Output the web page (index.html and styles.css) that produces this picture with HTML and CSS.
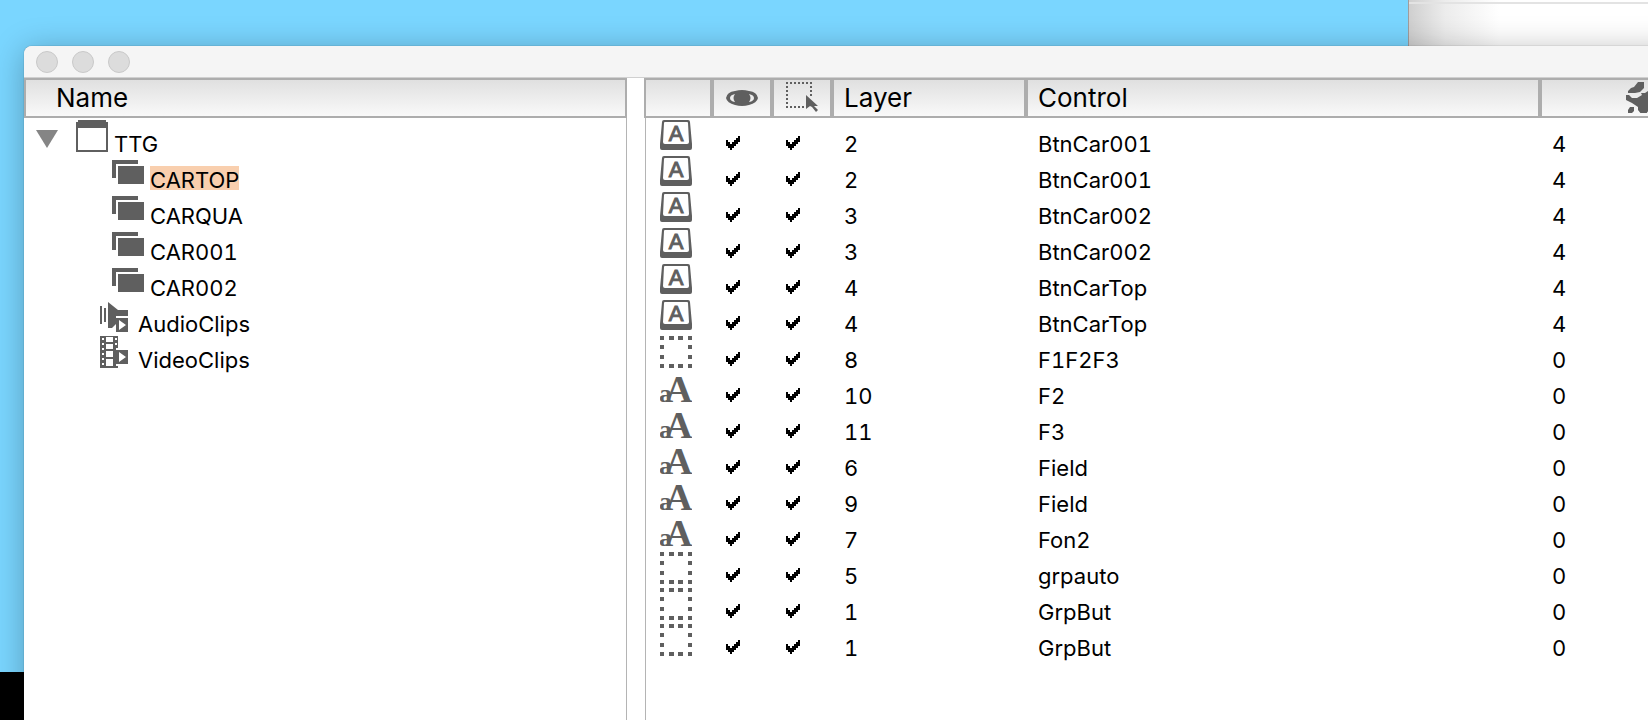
FILE: index.html
```html
<!DOCTYPE html>
<html lang="en">
<head>
  <meta charset="UTF-8">
  <meta name="viewport" content="width=device-width, initial-scale=1.0">
  <title>Project</title>
  <link rel="stylesheet" href="styles.css">
</head>
<body>

  <svg class="sprite" aria-hidden="true">
    <symbol id="icon-card" viewBox="0 0 32 32">
      <path d="M2 0h28v2h2v30H0V2h2zM2 8v22h28V8z" fill-rule="evenodd"/>
    </symbol>
    <symbol id="icon-stack" viewBox="0 0 32 32">
      <path d="M0 4h26v4H4v14H0zM6 10h26v18H6z"/>
    </symbol>
    <symbol id="icon-audio" viewBox="0 0 32 32">
      <path d="M0 6h2v18H0zM4 8h2v14H4zM8 2l10 8h10v6H16v8l-4 4H8z"/>
      <path d="M16 18h12v14H16zM19 20v10l7-5z" fill-rule="evenodd"/>
    </symbol>
    <symbol id="icon-video" viewBox="0 0 32 32">
      <path d="M0 0h18v12h-2v20H0zM2 2v2h2V2zM2 7v2h2V7zM2 12v2h2v-2zM2 17v2h2v-2zM2 22v2h2v-2zM2 27v2h2v-2zM6 1v5h7V1zM6 8v5h7V8zM6 15v6h7v-6zM6 23v7h7v-7zM15 2v2h2V2zM15 7v2h2V7z" fill-rule="evenodd"/>
      <path d="M16 14h12v14H16zM19 16v10l7-5zM13 30h5v2h-5z" fill-rule="evenodd"/>
    </symbol>
    <symbol id="icon-button" viewBox="0 0 32 32">
      <path d="M4 0h24q2 0 2 2l2 22v4q0 2-2 2H2q-2 0-2-2v-4L2 2q0-2 2-2zM5 2q-1 0-1 1L3 22q0 2 2 2h22q2 0 2-2L28 3q0-1-1-1z" fill-rule="evenodd"/>
      <text x="16" y="21" text-anchor="middle" class="glyph-sans">A</text>
    </symbol>
    <symbol id="icon-group" viewBox="0 0 32 32">
      <path d="M0 0h4v4H0zM9 0h5v4H9zM18 0h5v4h-5zM28 0h4v4h-4zM0 9h4v4H0zM28 9h4v4h-4zM0 19h4v4H0zM28 19h4v4h-4zM0 28h4v4H0zM9 28h5v4H9zM18 28h5v4h-5zM28 28h4v4h-4z"/>
    </symbol>
    <symbol id="icon-field" viewBox="0 0 32 32">
      <text x="-1" y="30" class="glyph-small">a</text>
      <text x="5" y="30" class="glyph-serif">A</text>
    </symbol>
    <symbol id="icon-eye" viewBox="0 0 32 32">
      <path d="M0 18Q1 12 9 11q7-2 14 0 8 1 9 7-1 5-9 7-7 2-14 0-8-2-9-7zM4 18q0 3 5 4-3-4 0-8-5 1-5 4zM28 18q0-3-5-4 3 4 0 8 5-1 5-4z" fill-rule="evenodd"/>
    </symbol>
    <symbol id="icon-select" viewBox="0 0 32 32">
      <path d="M0 3h26M0 27h20" fill="none" stroke="#5f5f5f" stroke-width="2" stroke-dasharray="2 2"/>
      <path d="M1 6v20M25 6v12" fill="none" stroke="#5f5f5f" stroke-width="2" stroke-dasharray="2 2"/>
      <path d="M20 15l12 11h-4l4 4-2 2-4-5-2-1-4 3z"/>
    </symbol>
    <symbol id="icon-script" viewBox="0 0 32 32">
      <path d="M12 1h6v6l-4 4-5 1H2v-2l3-3 3-1zM0 14h3l3 3h5l5-3-1-2h4l3-2 6 5 3 3v4l-5 3-6 8-4 1-4-5v-3l-6-4-6-3zM4 26h4v4l-2 2H2v-3z"/>
    </symbol>
  </svg>

  <div class="back-window"></div>
  <div class="dock"></div>

  <main class="window">
    <div class="titlebar">
      <button type="button" class="dot" aria-label="Close"></button>
      <button type="button" class="dot" aria-label="Minimize"></button>
      <button type="button" class="dot" aria-label="Zoom"></button>
    </div>

    <div class="panes">
      <section class="tree-pane">
        <h2 class="pane-head">Name</h2>
        <ul class="tree">
          <li>
            <div class="node root">
              <button type="button" class="toggle" aria-label="Collapse TTG"></button>
              <svg class="icon"><use href="#icon-card"/></svg>
              <span class="label">TTG</span>
            </div>
            <ul class="tree cards">
              <li class="node"><svg class="icon"><use href="#icon-stack"/></svg><span class="label selected">CARTOP</span></li>
              <li class="node"><svg class="icon"><use href="#icon-stack"/></svg><span class="label">CARQUA</span></li>
              <li class="node"><svg class="icon"><use href="#icon-stack"/></svg><span class="label">CAR001</span></li>
              <li class="node"><svg class="icon"><use href="#icon-stack"/></svg><span class="label">CAR002</span></li>
            </ul>
            <ul class="tree clips">
              <li class="node"><svg class="icon"><use href="#icon-audio"/></svg><span class="label">AudioClips</span></li>
              <li class="node"><svg class="icon"><use href="#icon-video"/></svg><span class="label">VideoClips</span></li>
            </ul>
          </li>
        </ul>
      </section>

      <section class="table-pane">
        <table class="controls">
          <colgroup>
            <col class="col-type">
            <col class="col-check">
            <col class="col-check">
            <col class="col-layer">
            <col>
            <col class="col-script">
          </colgroup>
          <thead>
            <tr>
              <th></th>
              <th class="tool" aria-label="Visible"><svg class="icon"><use href="#icon-eye"/></svg></th>
              <th class="tool" aria-label="Selectable"><svg class="icon"><use href="#icon-select"/></svg></th>
              <th>Layer</th>
              <th>Control</th>
              <th class="center" aria-label="Script"><svg class="icon"><use href="#icon-script"/></svg></th>
            </tr>
          </thead>
          <tbody id="rows"></tbody>
        </table>
      </section>
    </div>
  </main>

  <script>
    // type, layer, control, script lines
    var controls = [
      ['button', 2, 'BtnCar001', 4],
      ['button', 2, 'BtnCar001', 4],
      ['button', 3, 'BtnCar002', 4],
      ['button', 3, 'BtnCar002', 4],
      ['button', 4, 'BtnCarTop', 4],
      ['button', 4, 'BtnCarTop', 4],
      ['group', 8, 'F1F2F3', 0],
      ['field', 10, 'F2', 0],
      ['field', 11, 'F3', 0],
      ['field', 6, 'Field', 0],
      ['field', 9, 'Field', 0],
      ['field', 7, 'Fon2', 0],
      ['group', 5, 'grpauto', 0],
      ['group', 1, 'GrpBut', 0],
      ['group', 1, 'GrpBut', 0]
    ];

    document.getElementById('rows').innerHTML = controls.map(function (c) {
      return '<tr>' +
        '<td class="type"><svg class="icon"><use href="#icon-' + c[0] + '"/></svg></td>' +
        '<td class="check"><input type="checkbox" checked aria-label="' + c[2] + ' visible"></td>' +
        '<td class="check"><input type="checkbox" checked aria-label="' + c[2] + ' selectable"></td>' +
        '<td>' + c[1] + '</td>' +
        '<td>' + c[2] + '</td>' +
        '<td>' + c[3] + '</td>' +
        '</tr>';
    }).join('');
  </script>

</body>
</html>
```
FILE: styles.css
```css
* {
  box-sizing: border-box;
}

body {
  margin: 0;
  height: 100vh;
  padding: 46px 0 0 24px;
  overflow: hidden;
  background-color: #7ad6ff;
  color: #000;
  font-family: Inter, "Liberation Sans", sans-serif;
  font-size: 22px;
  font-variant-numeric: tabular-nums;
  line-height: 20px;
}

button {
  padding: 0;
  border: none;
  cursor: pointer;
}

.sprite {
  display: none;
}

.icon {
  display: block;
  flex: none;
  width: 32px;
  height: 32px;
  fill: #5f5f5f;
}

.glyph-sans {
  font: 22px "Liberation Sans", sans-serif;
  stroke: #5f5f5f;
  stroke-width: 1px;
}

.glyph-serif {
  font: bold 38px "Liberation Serif", serif;
}

.glyph-small {
  font: bold 26px "Liberation Serif", serif;
}

/* things behind the window */
.back-window {
  position: absolute;
  top: 0;
  left: 1408px;
  right: 0;
  height: 100px;
  border-left: 1px solid #a09c9c;
  background: linear-gradient(transparent 2px, #e3e3e3 2px, #e3e3e3 4px, transparent 4px),
    linear-gradient(to right, #cfcfcf, #ececec 36px, #fff 90px);
}

.dock {
  position: absolute;
  left: 0;
  bottom: 0;
  width: 100%;
  height: 48px;
  background-color: #000;
}

.window {
  position: relative;
  display: flex;
  flex-direction: column;
  height: 100%;
  margin-right: -96px;
  background-color: #fff;
  border-radius: 8px 0 0 0;
  box-shadow: 0 0 1px rgba(0, 0, 0, 0.6), 0 4px 32px rgba(0, 0, 0, 0.28);
}

.titlebar {
  display: flex;
  align-items: center;
  gap: 14px;
  flex: none;
  height: 32px;
  padding-left: 12px;
  background-color: #f5f5f5;
  border-bottom: 1px solid #d0d0d0;
  border-radius: 8px 0 0 0;
}

.dot {
  width: 22px;
  height: 22px;
  background-color: #dcdcdc;
  border: 1px solid #c9c9c9;
  border-radius: 50%;
}

.panes {
  display: flex;
  flex: 1;
  gap: 18px;
}

.pane-head,
.controls th {
  height: 40px;
  background: linear-gradient(#e0e0e0, #f9f9f9);
  border: 2px solid #adadad;
  font-size: 26px;
  font-weight: normal;
  line-height: 35px;
  text-align: left;
}

/* left tree */
.tree-pane {
  flex: none;
  width: 603px;
  border-right: 1px solid #b4b4b4;
}

.pane-head {
  margin: 0 -1px 0 0;
  padding-left: 30px;
}

.tree {
  margin: 0;
  padding: 0;
  list-style: none;
}

.cards {
  padding-left: 88px;
}

.clips {
  padding-left: 76px;
}

.node {
  display: flex;
  gap: 6px;
  height: 36px;
  padding-top: 2px;
}

.root {
  padding-left: 12px;
}

.toggle {
  width: 22px;
  height: 18px;
  margin: 10px 12px 0 0;
  background-color: #858585;
  clip-path: polygon(0 0, 100% 0, 50% 100%);
}

.label {
  align-self: flex-end;
  padding-top: 4px;
}

.selected {
  background-color: #f9cfae;
}

/* right table */
.table-pane {
  flex: 1;
  border-left: 1px solid #b4b4b4;
}

.controls {
  width: calc(100% + 2px);
  margin-left: -2px;
  table-layout: fixed;
  border-collapse: separate;
  border-spacing: 0;
}

.col-type {
  width: 68px;
}

.col-check {
  width: 60px;
}

.col-layer {
  width: 194px;
}

.col-script {
  width: 204px;
}

.controls th {
  padding: 0 0 0 10px;
  vertical-align: top;
}

.controls th.tool {
  padding-left: 12px;
}

.controls th.center {
  padding: 1px 0 0;
}

.center .icon {
  margin: 0 auto;
}

.controls td {
  height: 36px;
  padding: 0 0 0 12px;
  vertical-align: bottom;
}

.controls td.type {
  padding: 2px 0 0 16px;
  vertical-align: top;
}

.controls td.check {
  padding: 0 0 4px 14px;
}

.check input {
  display: block;
  width: 14px;
  height: 14px;
  margin: 0;
  appearance: none;
}

.check input:checked {
  background-color: #000;
  clip-path: polygon(12px 0, 14px 0, 14px 6px, 12px 6px, 12px 8px, 10px 8px, 10px 10px, 8px 10px, 8px 12px, 6px 12px, 6px 14px, 4px 14px, 4px 12px, 2px 12px, 2px 10px, 0 10px, 0 4px, 2px 4px, 2px 6px, 4px 6px, 4px 8px, 6px 8px, 6px 6px, 8px 6px, 8px 4px, 10px 4px, 10px 2px, 12px 2px);
}
```
